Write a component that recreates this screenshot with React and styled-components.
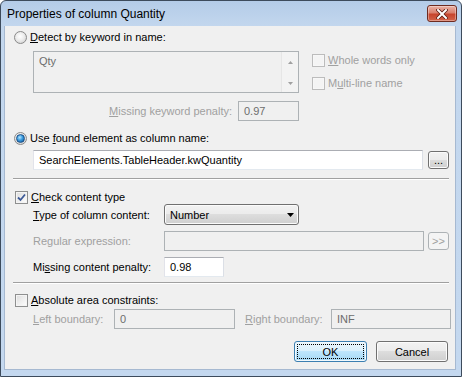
import React from "react";
import styled, { createGlobalStyle, css } from "styled-components";

const GlobalStyle = createGlobalStyle`
  html, body { margin: 0; padding: 0; background: #ffffff; }
  body {
    font-family: "Liberation Sans", Arial, sans-serif;
    font-size: 11px;
    color: #000;
  }
  * { box-sizing: border-box; }
`;

const Window = styled.div`
  width: 462px;
  height: 377px;
  border: 1px solid #3d4b5c;
  border-radius: 6px 6px 0 0;
  background: linear-gradient(#b4cce8, #c3d7ee 26px, #c4d8ef);
  display: flex;
  flex-direction: column;
  padding: 0 5px 6px 3px;
`;

const TitleBar = styled.div`
  height: 25px;
  display: flex;
  align-items: flex-start;
  justify-content: space-between;
  padding: 4px 0 0 3px;
  margin-right: -1px;
`;

const Title = styled.span`
  font-family: "Liberation Sans", Arial, sans-serif;
  font-size: 12px;
  line-height: 18px;
  color: #000;
`;

const CloseButton = styled.div`
  width: 30px;
  height: 17px;
  border: 1px solid #6e2b20;
  border-radius: 3px;
  background: linear-gradient(#eab2a6, #d9806d 45%, #c7442c 55%, #d2644a);
  display: flex;
  align-items: center;
  justify-content: center;
  box-shadow: inset 0 0 0 1px rgba(255, 255, 255, 0.35);
`;

const Client = styled.div`
  flex: 1;
  background: #f0f0f0;
  border: 1px solid #a6b9d1;
  border-top: none;
  padding: 3px 7px 0 9px;
  display: flex;
  flex-direction: column;
`;

const OptionRow = styled.label`
  display: flex;
  align-items: center;
  height: 14px;
  gap: ${(p) => p.$gap ?? 3}px;
  margin-top: ${(p) => p.$top ?? 0}px;
  margin-left: ${(p) => p.$left ?? 0}px;
  color: ${(p) => (p.$disabled ? "#a0a0a0" : "#000")};
  white-space: nowrap;
`;

const U = styled.span`
  text-decoration: underline;
`;

const RadioDot = styled.span`
  width: 13px;
  height: 13px;
  border-radius: 50%;
  border: 1px solid #8a8a8a;
  background: radial-gradient(circle at 45% 40%, #ffffff 0, #ececec 45%, #c9c9c9 100%);
  display: flex;
  align-items: center;
  justify-content: center;
  flex: none;
  &::after {
    content: "";
    display: ${(p) => (p.$checked ? "block" : "none")};
    width: 7px;
    height: 7px;
    border-radius: 50%;
    border: 1px solid #1c4f86;
    background: radial-gradient(circle at 40% 35%, #b7e6ff 0, #3a9ce0 45%, #0b4f90 100%);
  }
`;

const CheckBox = styled.span`
  width: 13px;
  height: 13px;
  border: 1px solid ${(p) => (p.$disabled ? "#bcbcbc" : "#8e8f8f")};
  background: ${(p) => (p.$disabled ? "#f4f4f4" : "linear-gradient(135deg, #dcdcdc, #ffffff)")};
  box-shadow: inset 0 0 0 1px ${(p) => (p.$disabled ? "#f7f7f7" : "#f4f4f4")};
  display: flex;
  align-items: center;
  justify-content: center;
  flex: none;
`;

const KeywordBlock = styled.div`
  display: flex;
  margin: 7px 0 0 19px;
`;

const ListBox = styled.div`
  width: 266px;
  height: 42px;
  border: 1px solid #adb2b5;
  background: #f0f0f0;
  display: flex;
  justify-content: space-between;
  color: #6d6d6d;
`;

const ListText = styled.span`
  padding: 3px 0 0 5px;
`;

const ScrollBar = styled.div`
  width: 17px;
  border-left: 1px solid #e6e6e6;
  background: #f3f3f3;
  display: flex;
  flex-direction: column;
  justify-content: space-between;
  align-items: center;
  padding: 9px 0 7px;
`;

const CheckColumn = styled.div`
  display: flex;
  flex-direction: column;
  gap: 9px;
  margin-left: 13px;
  padding-top: 2px;
`;

const FieldRow = styled.div`
  display: flex;
  align-items: center;
  justify-content: ${(p) => (p.$end ? "flex-end" : "flex-start")};
  width: ${(p) => (p.$width ? `${p.$width}px` : "auto")};
  gap: ${(p) => p.$gap ?? 6}px;
  margin-top: ${(p) => p.$top ?? 0}px;
  margin-left: ${(p) => p.$left ?? 0}px;
`;

const Label = styled.span`
  color: ${(p) => (p.$disabled ? "#a0a0a0" : "#000")};
  width: ${(p) => (p.$width ? `${p.$width}px` : "auto")};
  padding-left: ${(p) => p.$indent ?? 0}px;
  white-space: nowrap;
  flex: none;
`;

const TextBox = styled.div`
  width: ${(p) => p.$width}px;
  height: 20px;
  flex: none;
  padding: 0 5px;
  display: flex;
  align-items: center;
  ${(p) =>
    p.$disabled
      ? css`
          border: 1px solid #adb2b5;
          background: #f0f0f0;
          color: #6d6d6d;
        `
      : css`
          border: 1px solid #abadb3;
          border-color: #abadb3 #dbdfe6 #e3e9ef #e2e3ea;
          background: #ffffff;
          color: #000;
        `}
`;

const Button = styled.div`
  width: ${(p) => p.$width}px;
  height: ${(p) => p.$height ?? 21}px;
  flex: none;
  border-radius: 3px;
  display: flex;
  align-items: center;
  justify-content: center;
  position: relative;
  ${(p) =>
    p.$disabled
      ? css`
          border: 1px solid #adb2b5;
          background: #f4f4f4;
          color: #a0a0a0;
        `
      : p.$default
      ? css`
          border: 1px solid #3c7fb1;
          background: linear-gradient(#eaf6fd, #d9f0fc 50%, #bee6fd 50%, #a7d9f5);
          box-shadow: inset 0 0 0 1px #f2f9fd;
        `
      : css`
          border: 1px solid #707070;
          background: linear-gradient(#f2f2f2, #ebebeb 50%, #dddddd 50%, #cfcfcf);
          box-shadow: inset 0 0 0 1px #fbfbfb;
        `}
`;

const FocusRing = styled.span`
  position: absolute;
  inset: 2px;
  border: 1px dotted #000;
  border-radius: 1px;
`;

const Separator = styled.div`
  width: 436px;
  margin: ${(p) => p.$top}px 0 0 -1px;
  border-top: 1px solid #a0a0a0;
  border-bottom: 1px solid #ffffff;
`;

const Combo = styled.div`
  width: 135px;
  height: 21px;
  border: 1px solid #707070;
  border-radius: 3px;
  background: linear-gradient(#f2f2f2, #ebebeb 50%, #dddddd 50%, #cfcfcf);
  box-shadow: inset 0 0 0 1px #fbfbfb;
  display: flex;
  align-items: center;
  justify-content: space-between;
  padding: 0 4px 0 5px;
`;

const ContentGrid = styled.div`
  display: grid;
  grid-template-columns: 131px auto;
  grid-auto-rows: min-content;
  row-gap: 6px;
  align-items: center;
  margin-left: 19px;
`;

const ButtonBar = styled.div`
  display: flex;
  justify-content: flex-end;
  gap: 9px;
  margin-top: 12px;
`;

const CheckMark = () => (
  <svg width="9" height="9" viewBox="0 0 9 9">
    <path d="M1 4.5 L3.5 7 L8 1.5" fill="none" stroke="#3d5a98" strokeWidth="1.8" />
  </svg>
);

const CloseGlyph = () => (
  <svg width="12" height="10" viewBox="0 0 12 10">
    <path d="M2 1 L10 9 M10 1 L2 9" stroke="#5a1a10" strokeWidth="3.6" strokeLinecap="square" />
    <path d="M2 1 L10 9 M10 1 L2 9" stroke="#ffffff" strokeWidth="2" strokeLinecap="square" />
  </svg>
);

const Arrow = ({ up, color = "#a0a0a0", w = 5, h = 3 }) => (
  <svg width={w} height={h} viewBox={`0 0 ${w} ${h}`}>
    <path d={up ? `M0 ${h} L${w / 2} 0 L${w} ${h} Z` : `M0 0 L${w} 0 L${w / 2} ${h} Z`} fill={color} />
  </svg>
);

export default function App() {
  return (
    <>
      <GlobalStyle />
      <Window>
        <TitleBar>
          <Title>Properties of column Quantity</Title>
          <CloseButton>
            <CloseGlyph />
          </CloseButton>
        </TitleBar>
        <Client>
          <OptionRow $top={1}>
            <RadioDot />
            <span>
              <U>D</U>etect by keyword in name:
            </span>
          </OptionRow>

          <KeywordBlock>
            <ListBox>
              <ListText>Qty</ListText>
              <ScrollBar>
                <Arrow up />
                <Arrow />
              </ScrollBar>
            </ListBox>
            <CheckColumn>
              <OptionRow $disabled>
                <CheckBox $disabled />
                <span>
                  <U>W</U>hole words only
                </span>
              </OptionRow>
              <OptionRow $disabled>
                <CheckBox $disabled />
                <span>
                  M<U>u</U>lti-line name
                </span>
              </OptionRow>
            </CheckColumn>
          </KeywordBlock>

          <FieldRow $end $width={285} $top={8}>
            <Label $disabled>
              <U>M</U>issing keyword penalty:
            </Label>
            <TextBox $disabled $width={61}>
              0.97
            </TextBox>
          </FieldRow>

          <OptionRow $top={10}>
            <RadioDot $checked />
            <span>
              Use <U>f</U>ound element as column name:
            </span>
          </OptionRow>

          <FieldRow $top={5} $left={19} $gap={5}>
            <TextBox $width={390}>SearchElements.TableHeader.kwQuantity</TextBox>
            <Button $width={21} $height={18}>
              ...
            </Button>
          </FieldRow>

          <Separator $top={8} />

          <OptionRow $top={10} $left={1}>
            <CheckBox>
              <CheckMark />
            </CheckBox>
            <span>
              <U>C</U>heck content type
            </span>
          </OptionRow>

          <ContentGrid>
            <Label>
              <U>T</U>ype of column content:
            </Label>
            <Combo>
              <span>Number</span>
              <Arrow color="#000" w={7} h={4} />
            </Combo>
            <Label $disabled>Regular expression:</Label>
            <FieldRow $gap={4}>
              <TextBox $disabled $width={260} />
              <Button $disabled $width={21} $height={18}>
                &gt;&gt;
              </Button>
            </FieldRow>
            <Label>
              Mi<U>s</U>sing content penalty:
            </Label>
            <TextBox $width={60}>0.98</TextBox>
          </ContentGrid>

          <Separator $top={5} />

          <OptionRow $top={9} $left={1}>
            <CheckBox />
            <span>
              <U>A</U>bsolute area constraints:
            </span>
          </OptionRow>

          <FieldRow $top={2} $left={19} $gap={0}>
            <Label $disabled $width={81}>
              <U>L</U>eft boundary:
            </Label>
            <TextBox $disabled $width={121}>
              0
            </TextBox>
            <Label $disabled $width={96} $indent={10}>
              <U>R</U>ight boundary:
            </Label>
            <TextBox $disabled $width={120}>
              INF
            </TextBox>
          </FieldRow>

          <ButtonBar>
            <Button $default $width={73}>
              <FocusRing />
              OK
            </Button>
            <Button $width={72}>Cancel</Button>
          </ButtonBar>
        </Client>
      </Window>
    </>
  );
}
